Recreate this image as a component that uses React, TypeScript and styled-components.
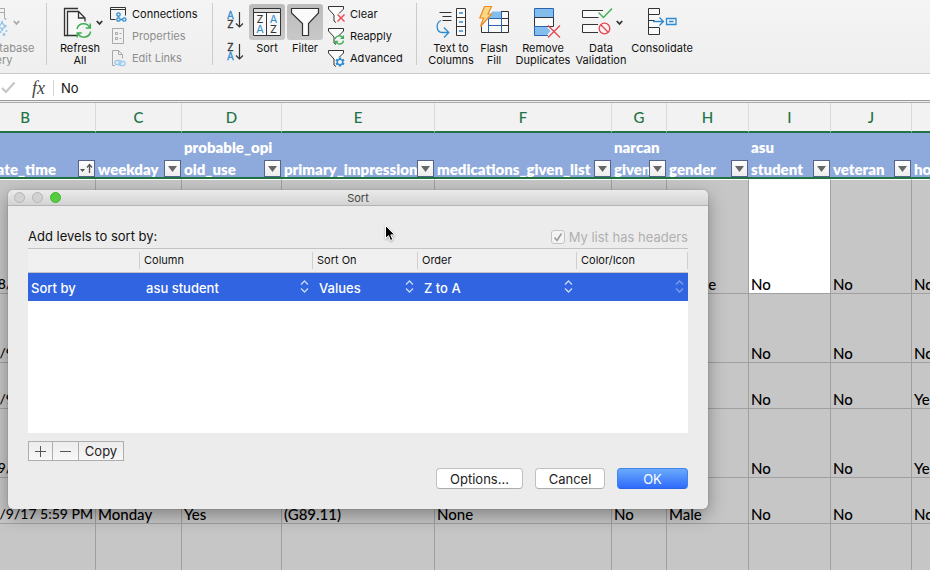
import React from "react";
import styled, { createGlobalStyle } from "styled-components";

const ui = `Inter, "Liberation Sans", sans-serif`;
const sheetFont = `Lato, "Open Sans", sans-serif`;

const ink = "#333333";
const blue = "#2f8bd0";
const deepBlue = "#2a63b5";
const paleBlue = "#83bdee";
const green = "#3fae55";
const red = "#e8474f";
const faint = "#a9a9a9";

const GlobalStyle = createGlobalStyle`
  *, *::before, *::after { box-sizing: border-box; }
  html, body, #root { height: 100%; margin: 0; }
  body { background: #c6c6c6; overflow: hidden; }
  button, input, select { font: inherit; color: inherit; margin: 0; padding: 0; }
  svg { display: block; flex: none; overflow: visible; }
`;

const Page = styled.main`
  position: relative;
  display: flex;
  flex-direction: column;
  height: 100vh;
  overflow: hidden;
  font-family: ${ui};
  color: #111;
`;

/* ---------- ribbon ---------- */

const Ribbon = styled.div`
  display: flex;
  flex: none;
  align-items: flex-start;
  height: 74px;
  padding-top: 3px;
  background: linear-gradient(#f4f4f4, #efefef);
  border-bottom: 1px solid #c9c9c9;
  font-size: 11px;
  line-height: 12px;
`;

const Separator = styled.div`
  flex: none;
  width: 1px;
  height: 62px;
  background: #cccccc;
`;

const Group = styled.div<{ $start?: number }>`
  display: flex;
  flex: none;
  padding-left: ${(p) => p.$start ?? 0}px;
`;

const BigButton = styled.button<{ $width: number; $faded?: boolean; $clipped?: boolean }>`
  display: flex;
  flex: none;
  flex-direction: column;
  align-items: center;
  width: ${(p) => p.$width}px;
  margin-left: ${(p) => (p.$clipped ? -53 : 0)}px;
  border: 0;
  background: none;
  color: ${(p) => (p.$faded ? "#8e8e8e" : "#111")};
  line-height: 12px;
  white-space: nowrap;
`;

const IconRow = styled.span<{ $inset?: number }>`
  display: flex;
  align-items: center;
  justify-content: ${(p) => (p.$inset ? "flex-start" : "center")};
  gap: 4px;
  width: 100%;
  height: 39px;
  padding: 4px 0 3px ${(p) => p.$inset ?? 0}px;
`;

const Pressed = styled.span`
  display: flex;
  align-items: center;
  justify-content: center;
  width: 36px;
  height: 36px;
  margin: 1px 0 2px;
  border-radius: 3px;
  background: linear-gradient(#bcbcbc, #c8c8c8);
`;

const SmallList = styled.div<{ $width: number }>`
  display: flex;
  flex: none;
  flex-direction: column;
  width: ${(p) => p.$width}px;
`;

const SmallButton = styled.button<{ $faded?: boolean }>`
  display: flex;
  align-items: center;
  gap: 5px;
  height: 22px;
  border: 0;
  background: none;
  color: ${(p) => (p.$faded ? "#8e8e8e" : "#111")};
  white-space: nowrap;
`;

const SortStack = styled.div`
  display: flex;
  flex-direction: column;
  gap: 12px;
  width: 22px;
  padding-top: 7px;
`;

const PlainIconButton = styled.button`
  display: flex;
  height: 20px;
  border: 0;
  background: none;
`;

const Chevron = ({ color = ink }: { color?: string }) => (
  <svg width="7" height="6" viewBox="0 0 7 6" fill="none" stroke={color} strokeWidth="1.800">
    <path d="M.8 1l2.700 3 2.700-3" />
  </svg>
);

const DatabaseIcon = () => (
  <svg width="30" height="32" viewBox="0 0 30 32" fill="none" stroke={faint}>
    <path d="M8 1.500h17.500v10M8 5.500h17.500" />
    <g stroke="#8cc4ec" strokeWidth="1.300">
      <path d="M20 19c2-.5 2.500-1.500 3-5 .7 3.500 1.500 4.300 4.500 5-3 .8-4 1.800-4.500 5-.5-3-1-4-3-4.500" />
    </g>
    <g fill="#8cc4ec" stroke="none">
      <circle cx="26.500" cy="12" r="1" />
      <circle cx="25" cy="27.500" r="1.400" />
      <circle cx="21.500" cy="25" r="1" />
      <circle cx="27.500" cy="24" r="1" />
    </g>
  </svg>
);

const RefreshArrows = () => (
  <>
    <path d="M1 6.500A6.800 6.800 0 0 1 13.600 4.800M14.300 1v4.500H9.800" />
    <path d="M14.600 9A6.800 6.800 0 0 1 2 11.200M1.300 15v-4.500h4.500" />
  </>
);

const RefreshIcon = () => (
  <svg width="28" height="32" viewBox="0 0 28 32" fill="none" stroke={ink} strokeWidth="1.300">
    <path d="M14 1.500H.5v27H3.500" />
    <path d="M13 28.500H3.500v-24h11l6.500 6.500v3.500" fill="#f8f8f8" />
    <path d="M14.500 4.500v6.500H21" />
    <g transform="translate(12 15.500)" stroke={green} strokeWidth="1.500">
      <RefreshArrows />
    </g>
  </svg>
);

const ConnectionsIcon = () => (
  <svg width="17" height="18" viewBox="0 0 17 18" fill="none" stroke={ink}>
    <path d="M5.500 14.500h-5v-12h15v8M.5 4.500h15" />
    <g stroke={blue} strokeWidth="1.300">
      <circle cx="8.500" cy="9.500" r="1.700" />
      <circle cx="8.500" cy="14.500" r="1.700" />
      <circle cx="14.300" cy="14.500" r="1.700" />
      <path d="M8.500 11.200v1.600M10.200 14.500h2.400" />
    </g>
  </svg>
);

const PropertiesIcon = () => (
  <svg width="17" height="18" viewBox="0 0 17 18" fill="none" stroke={faint}>
    <path d="M2.500 1.500h11v15h-11zM5.500 5.500h2v2h-2zM5.500 10.500h2v2h-2zM9.500 6.500h2M9.500 11.500h2" />
  </svg>
);

const LinksIcon = () => (
  <svg width="17" height="18" viewBox="0 0 17 18" fill="none" stroke={faint}>
    <path d="M5 16.500H2.500v-15h6l4 4v4M8.500 1.500v4h4" />
    <g stroke="#9accf0" strokeWidth="1.400">
      <rect x="5" y="11.500" width="6" height="4" rx="2" />
      <rect x="9" y="12.500" width="6" height="4" rx="2" />
    </g>
  </svg>
);

const LetterSortIcon = ({ first, second }: { first: string; second: string }) => (
  <svg width="18" height="20" viewBox="0 0 18 20" fontFamily="Inter, sans-serif" fontSize="10" textAnchor="middle">
    <text x="4.500" y="8.500" fill={first === "A" ? blue : ink} stroke={first === "A" ? blue : ink} strokeWidth=".3">{first}</text>
    <text x="4.500" y="17.500" fill={second === "A" ? blue : ink} stroke={second === "A" ? blue : ink} strokeWidth=".3">{second}</text>
    <path d="M13.500 2v15M10 13.500l3.500 3.500 3.500-3.500" fill="none" stroke={ink} strokeWidth="1.200" />
  </svg>
);

const SortIcon = () => (
  <svg width="28" height="28" viewBox="0 0 28 28" fontFamily="Inter, sans-serif" fontSize="11" textAnchor="middle">
    <path d="M.5.5h27v27H.5z" fill="#f8f8f8" stroke={ink} />
    <path d="M1 1h26v3H1z" fill="#d9d9d9" />
    <path d="M.5 4.500h27M13.500 4.500v23" stroke={ink} />
    <text x="7" y="15" fill={ink}>Z</text>
    <text x="7" y="25" fill={blue}>A</text>
    <text x="20.500" y="15" fill={blue}>A</text>
    <text x="20.500" y="25" fill={ink}>Z</text>
  </svg>
);

const FilterIcon = () => (
  <svg width="28" height="28" viewBox="0 0 28 28">
    <path d="M.5.5h27v4.500l-10 10.500v12h-6v-12L.5 5z" fill="#fbfbfb" stroke={ink} strokeWidth="1.200" />
  </svg>
);

const FunnelBadge = ({ kind }: { kind: "clear" | "reapply" | "advanced" }) => (
  <svg width="17" height="18" viewBox="0 0 17 18" fill="none" stroke={ink}>
    <path d="M8 17.500l-2-1.500v-6L.5 4V1.500h15V4L11 8.500" fill="#fbfbfb" />
    {kind === "clear" && <path d="M9.500 9.500l7 7M16.500 9.500l-7 7" stroke={red} strokeWidth="1.400" />}
    {kind === "reapply" && (
      <g transform="translate(6.500 8) scale(.62)" stroke={green} strokeWidth="2.200">
        <RefreshArrows />
      </g>
    )}
    {kind === "advanced" && (
      <g stroke={blue}>
        <path d="M12 8.500v2M12 15.500v2M8 10.700l1.800 1M14.200 14.300l1.800 1M8 15.300l1.800-1M14.200 11.700l1.800-1" strokeWidth="2.400" />
        <circle cx="12" cy="13" r="2.700" strokeWidth="1.300" fill="#f2f2f2" />
      </g>
    )}
  </svg>
);

const TextColumnsIcon = () => (
  <svg width="30" height="32" viewBox="0 0 30 32" fill="none" stroke={ink}>
    <path d="M3.500 5.500h12M6.500 9.500h9M6.500 13.500h9" />
    <path d="M20.500 1.500h9v27h-9zM20.500 10.500h9M20.500 19.500h9" fill="#fafafa" />
    <g stroke={blue} strokeWidth="1.300">
      <path d="M23 6h4M23 15h4M23 24h4" />
      <path d="M5 13.500C-1 16 .5 25.500 6 25.500h6.500M8 20.500l4.800 5-4.800 5" />
    </g>
  </svg>
);

const FlashIcon = () => (
  <svg width="30" height="32" viewBox="0 0 30 32" fill="none">
    <path d="M2.500 4.500h27v21h-27z" fill="#fafafa" />
    <path d="M13 4.500h9.500v7h-13z" fill={paleBlue} />
    <path d="M22 4.500h7.500v21h-27v-6M22.500 4.500v21M22.500 11.500h7M22.500 18.500h7M9.500 18.500v7" stroke={ink} />
    <path d="M22.500 5v20.500M9.500 25V11.500h13M9.500 18.500h13" stroke={deepBlue} />
    <path d="M5.500-.5h7L9 7h3.500L1.500 19.500 4.500 11H.8z" fill="#fbd886" stroke="#ee8a26" strokeWidth="1.200" />
  </svg>
);

const RemoveIcon = () => (
  <svg width="26" height="32" viewBox="0 0 26 32" fill="none">
    <path d="M.5 1.500h19v9H.5z" fill={paleBlue} stroke={deepBlue} />
    <path d="M.5 10.500h19v9H.5z" fill="#fafafa" stroke={ink} />
    <path d="M12.500 28.500H.5v-9h12l4 4.500z" fill={paleBlue} />
    <path d="M14 28.500H.5v-9H13" stroke={deepBlue} />
    <path d="M14 18.500l12 12M26 18.500l-12 12" stroke={red} strokeWidth="1.300" />
  </svg>
);

const ValidationIcon = () => (
  <svg width="30" height="32" viewBox="0 0 30 32" fill="none" stroke={ink}>
    <path d="M21 3.500H.5v7h16M16 17.500H.5v8H16" fill="#fafafa" />
    <path d="M16.500 5.500l5 5 8.500-9" stroke={green} strokeWidth="1.400" />
    <circle cx="22.500" cy="21.500" r="5.300" fill="#fdf3f3" stroke={red} strokeWidth="1.300" />
    <path d="M18.800 17.800l7.400 7.400" stroke={red} strokeWidth="1.300" />
  </svg>
);

const ConsolidateIcon = () => (
  <svg width="28" height="32" viewBox="0 0 28 32" fill="none" stroke={ink}>
    <path d="M11.500 7V1.500H.5v26h11V21M.5 7.500h11M.5 13.500h6M.5 20.500h11" fill="#fafafa" />
    <g stroke={blue} strokeWidth="1.300">
      <path d="M5 14.500h10M11.500 10.500l4 4-4 4" />
      <path d="M18.500 11.500h9.500v6h-9.500zM21 14.500h4.500" />
    </g>
  </svg>
);

/* ---------- formula bar ---------- */

const FormulaBar = styled.div`
  display: flex;
  flex: none;
  align-items: center;
  height: 29px;
  padding-bottom: 2px;
  background: linear-gradient(#ffffff 26px, #999999 26px, #999999 27px, #ededed 27px, #ededed 28px, #ababab 28px);
`;

const CheckMark = styled.span`
  width: 32px;
  padding-left: 1px;
`;

const Fx = styled.label`
  width: 21px;
  color: #444;
  font: italic 18px/22px "Liberation Serif", serif;
`;

const FormulaInput = styled.input`
  flex: 1;
  height: 16px;
  min-width: 0;
  padding-left: 7px;
  border: 0;
  border-left: 1px solid #d5d5d5;
  outline: 0;
  background: none;
  font-size: 13px;
`;

/* ---------- sheet ---------- */

const SheetArea = styled.div`
  flex: 1;
  min-height: 0;
  overflow: hidden;
`;

const Sheet = styled.table`
  width: calc(100% + 126px);
  margin-left: -45px;
  border-spacing: 0;
  table-layout: fixed;
  font-family: ${sheetFont};
  font-size: 15px;
  line-height: 18px;
`;

const Letter = styled.th`
  height: 30px;
  padding: 0;
  border-right: 1px solid #dadada;
  border-bottom: 2px solid #217346;
  background: #f2f2f2;
  color: #217346;
  font-weight: 500;
`;

const FieldCell = styled.th`
  height: 46px;
  padding: 0 1px 0 0;
  overflow: hidden;
  border-bottom: 2px solid #217346;
  background: #8ea9db;
  color: #fff;
  font-weight: 800;
  line-height: 22px;
  text-align: left;
  vertical-align: bottom;
  white-space: nowrap;
`;

const FieldInner = styled.div`
  display: grid;
  align-items: end;
  height: 44px;
  > * { grid-area: 1 / 1; }
`;

const FieldName = styled.span<{ $right?: boolean }>`
  margin-bottom: -3px;
  padding: 0 ${(p) => (p.$right ? 39 : 0)}px 0 2px;
  text-align: ${(p) => (p.$right ? "right" : "left")};
`;

const FilterButton = styled.button`
  display: grid;
  place-items: center;
  justify-self: end;
  width: 17px;
  height: 17px;
  border: 1px solid #56648a;
  background: linear-gradient(#ffffff, #ececec);
`;

const Cell = styled.td<{ $active?: boolean; $top?: boolean; $h: number; $date?: boolean }>`
  height: ${(p) => p.$h}px;
  padding: 0 2px;
  overflow: hidden;
  border-top: ${(p) => (p.$top ? "1px solid #fff" : "0")};
  border-right: 1px solid #a0a0a0;
  border-bottom: 1px solid #a0a0a0;
  background: ${(p) => (p.$active ? "#fff" : "#c6c6c6")};
  color: #000;
  font-size: ${(p) => (p.$date ? 14 : 15)}px;
  font-weight: 500;
  text-align: ${(p) => (p.$date ? "right" : "left")};
  vertical-align: bottom;
  white-space: nowrap;
`;

const columns = [
  { letter: "B", width: 141, field: ["date_time"] },
  { letter: "C", width: 86, field: ["weekday"] },
  { letter: "D", width: 100, field: ["probable_opi", "oid_use"] },
  { letter: "E", width: 153, field: ["primary_impression"] },
  { letter: "F", width: 177, field: ["medications_given_list"] },
  { letter: "G", width: 55, field: ["narcan", "given"] },
  { letter: "H", width: 82, field: ["gender"] },
  { letter: "I", width: 82, field: ["asu", "student"] },
  { letter: "J", width: 81, field: ["veteran"] },
  { letter: "K", width: 0, field: ["homeless"] },
];

const rows = [
  { h: 115, cells: ["1/8/17 10:59 PM", "", "", "", "", "", "Female", "No", "No", "No"] },
  { h: 69, cells: ["1/9/17 5:59 PM", "", "", "", "", "", "", "No", "No", "No"] },
  { h: 46, cells: ["1/9/17 5:59 PM", "", "", "", "", "", "", "No", "No", "Yes"] },
  { h: 69, cells: ["1/9/17 10:59 PM", "", "", "", "", "", "", "No", "No", "Yes"] },
  { h: 46, cells: ["1/9/17 5:59 PM", "Monday", "Yes", "(G89.11)", "None", "No", "Male", "No", "No", "No"] },
  { h: 69, cells: ["", "", "", "", "", "", "", "", "", ""] },
];

/* ---------- sort dialog ---------- */

const Dialog = styled.section`
  position: absolute;
  top: 190px;
  left: 8px;
  width: 700px;
  overflow: hidden;
  border-radius: 5px;
  background: #ececec;
  box-shadow: 0 0 1px rgba(0, 0, 0, 0.6), 0 6px 18px rgba(0, 0, 0, 0.35);
  font-size: 13px;
  line-height: 16px;
`;

const TitleBar = styled.header`
  display: grid;
  grid-template-columns: 1fr auto 1fr;
  align-items: center;
  height: 16px;
  border-bottom: 1px solid #b4b4b4;
  background: linear-gradient(#ebebeb, #d3d3d3);
`;

const Lights = styled.div`
  display: flex;
  gap: 7px;
  padding-left: 6px;
`;

const Light = styled.button<{ $on?: boolean }>`
  width: 11px;
  height: 11px;
  border: 1px solid ${(p) => (p.$on ? "#41b533" : "#b5b5b5")};
  border-radius: 50%;
  background: ${(p) => (p.$on ? "#55cc3f" : "#d2d2d2")};
`;

const Title = styled.h1`
  margin: 0;
  color: #444;
  font-size: 11px;
  font-weight: 400;
  line-height: 14px;
`;

const DialogBody = styled.div`
  padding: 20px;
`;

const Intro = styled.div`
  display: flex;
  align-items: center;
  justify-content: space-between;
  height: 20px;
  margin-bottom: 2px;
`;

const CheckLabel = styled.label`
  display: flex;
  align-items: center;
  gap: 4px;
  padding-top: 2px;
  color: #b0b0b0;
`;

const CheckBox = styled.input`
  width: 14px;
  height: 14px;
  appearance: none;
  border: 1px solid #c4c4c4;
  border-radius: 3px;
  background: #f4f4f4;
`;

const CheckHolder = styled.span`
  display: grid;
  place-items: center;
  > * { grid-area: 1 / 1; }
  > svg { pointer-events: none; }
`;

const Levels = styled.div`
  height: 185px;
  border-top: 1px solid #c3c3c3;
  background: #fff;
`;

const LevelTable = styled.table`
  width: 100%;
  border-spacing: 0;
  table-layout: fixed;
`;

const LevelHead = styled.th`
  height: 24px;
  padding: 3px 0;
  border-bottom: 1px solid #c3c3c3;
  background: #f0f0f0;
  font-size: 11px;
  font-weight: 400;
  line-height: 17px;
  text-align: left;
`;

const HeadText = styled.span`
  display: block;
  height: 17px;
  padding-left: 4px;
  border-right: 1px solid #cfcfcf;
`;

const LevelCell = styled.td`
  height: 28px;
  padding: 2px 0 0 3px;
  background: #3064e1;
  color: #fff;
  font-weight: 500;
`;

const Picker = styled.div<{ $dim?: boolean }>`
  display: grid;
  align-items: center;
  padding-left: 3px;
  > * { grid-area: 1 / 1; }
  > svg {
    justify-self: end;
    margin: 0 4px 4px 0;
    opacity: ${(p) => (p.$dim ? 0.5 : 1)};
    pointer-events: none;
  }
`;

const Select = styled.select`
  appearance: none;
  width: 100%;
  border: 0;
  background: none;
  line-height: 18px;
`;

const UpDown = () => (
  <svg width="9" height="13" viewBox="0 0 9 13" fill="none" stroke="#c9d9fa" strokeWidth="1.300">
    <path d="M1 4.500L4.500 1 8 4.500M1 8.500L4.500 12 8 8.500" />
  </svg>
);

const Segments = styled.div`
  display: flex;
  width: fit-content;
  height: 20px;
  margin-top: 8px;
  border: 1px solid #adadad;
  background: linear-gradient(#ececec, #f8f8f8);
`;

const Segment = styled.button<{ $width: number }>`
  display: grid;
  place-items: center;
  width: ${(p) => p.$width}px;
  border: 0;
  background: none;
  color: #222;
  & + & { border-left: 1px solid #adadad; }
`;

const Footer = styled.footer`
  display: flex;
  justify-content: flex-end;
  gap: 12px;
  margin-top: 7px;
`;

const PushButton = styled.button<{ $width: number; $primary?: boolean }>`
  width: ${(p) => p.$width}px;
  height: 21px;
  border: 1px solid ${(p) => (p.$primary ? "#3f83f0" : "#c0c0c0")};
  border-bottom-color: ${(p) => (p.$primary ? "#2d62e8" : "#adadad")};
  border-radius: 4px;
  background: ${(p) => (p.$primary ? "linear-gradient(#6aaafb, #2f6bfb)" : "#fff")};
  color: ${(p) => (p.$primary ? "#fff" : "#222")};
  line-height: 18px;
`;

const Pointer = styled.svg`
  position: absolute;
  top: 224px;
  left: 384px;
  filter: drop-shadow(0 1px 1px rgba(0, 0, 0, 0.3));
`;

const noop = () => {};

export default function App() {
  return (
    <Page>
      <GlobalStyle />
      <Ribbon role="toolbar" aria-label="Data">
        <BigButton $width={99} $faded $clipped>
          <IconRow $inset={32}>
            <DatabaseIcon />
            <Chevron color={faint} />
          </IconRow>
          <span>New Database</span>
          <span>Query</span>
        </BigButton>
        <Separator />
        <Group $start={3}>
          <BigButton $width={60}>
            <IconRow $inset={14}>
              <RefreshIcon />
              <Chevron />
            </IconRow>
            <span>Refresh</span>
            <span>All</span>
          </BigButton>
          <SmallList $width={102}>
            <SmallButton><ConnectionsIcon />Connections</SmallButton>
            <SmallButton $faded><PropertiesIcon />Properties</SmallButton>
            <SmallButton $faded><LinksIcon />Edit Links</SmallButton>
          </SmallList>
        </Group>
        <Separator />
        <Group $start={13}>
          <SortStack>
            <PlainIconButton aria-label="Sort ascending"><LetterSortIcon first="A" second="Z" /></PlainIconButton>
            <PlainIconButton aria-label="Sort descending"><LetterSortIcon first="Z" second="A" /></PlainIconButton>
          </SortStack>
          <BigButton $width={38}>
            <Pressed><SortIcon /></Pressed>
            <span>Sort</span>
          </BigButton>
          <BigButton $width={38}>
            <Pressed><FilterIcon /></Pressed>
            <span>Filter</span>
          </BigButton>
          <Group $start={4}>
            <SmallList $width={88}>
              <SmallButton><FunnelBadge kind="clear" />Clear</SmallButton>
              <SmallButton><FunnelBadge kind="reapply" />Reapply</SmallButton>
              <SmallButton><FunnelBadge kind="advanced" />Advanced</SmallButton>
            </SmallList>
          </Group>
        </Group>
        <Separator />
        <Group $start={10}>
          <BigButton $width={48}>
            <IconRow><TextColumnsIcon /></IconRow>
            <span>Text to</span>
            <span>Columns</span>
          </BigButton>
          <BigButton $width={38}>
            <IconRow><FlashIcon /></IconRow>
            <span>Flash</span>
            <span>Fill</span>
          </BigButton>
          <BigButton $width={60}>
            <IconRow $inset={21}><RemoveIcon /></IconRow>
            <span>Remove</span>
            <span>Duplicates</span>
          </BigButton>
          <BigButton $width={56}>
            <IconRow $inset={9}><ValidationIcon /><Chevron /></IconRow>
            <span>Data</span>
            <span>Validation</span>
          </BigButton>
          <BigButton $width={66}>
            <IconRow><ConsolidateIcon /></IconRow>
            <span>Consolidate</span>
          </BigButton>
        </Group>
      </Ribbon>

      <FormulaBar>
        <CheckMark>
          <svg width="15" height="13" viewBox="0 0 15 13" fill="none" stroke="#c6c6c6" strokeWidth="2.200">
            <path d="M1 7l4 4 8.500-9.500" />
          </svg>
        </CheckMark>
        <Fx htmlFor="formula">fx</Fx>
        <FormulaInput id="formula" value="No" onChange={noop} />
      </FormulaBar>

      <SheetArea>
        <Sheet>
          <colgroup>
            {columns.map((c) => (
              <col key={c.letter} width={c.width || undefined} />
            ))}
          </colgroup>
          <thead>
            <tr>
              {columns.map((c) => (
                <Letter key={c.letter} scope="col">{c.letter}</Letter>
              ))}
            </tr>
            <tr>
              {columns.map((c, i) => (
                <FieldCell key={c.letter} scope="col">
                  <FieldInner>
                    <FieldName $right={i === 0}>
                      {c.field[0]}
                      {c.field[1] && <><br />{c.field[1]}</>}
                    </FieldName>
                    <FilterButton aria-label={`Filter ${c.field.join("")}`}>
                      {i === 0 ? (
                        <svg width="13" height="11" viewBox="0 0 13 11" fill="#555">
                          <path d="M0 6h5L2.500 9z" />
                          <path d="M9.500 10V2M7 4.500L9.500 1.500 12 4.500" fill="none" stroke="#555" strokeWidth="1.300" />
                        </svg>
                      ) : (
                        <svg width="9" height="6" viewBox="0 0 9 6"><path d="M0 0h9L4.500 6z" fill="#666" /></svg>
                      )}
                    </FilterButton>
                  </FieldInner>
                </FieldCell>
              ))}
            </tr>
          </thead>
          <tbody>
            {rows.map((r, ri) => (
              <tr key={ri}>
                {r.cells.map((text, ci) => (
                  <Cell key={ci} $h={r.h} $top={ri === 0} $active={ri === 0 && ci === 7} $date={ci === 0}>
                    {text}
                  </Cell>
                ))}
              </tr>
            ))}
          </tbody>
        </Sheet>
      </SheetArea>

      <Dialog role="dialog" aria-labelledby="sort-title">
        <TitleBar>
          <Lights>
            <Light aria-label="Close" />
            <Light aria-label="Minimize" />
            <Light aria-label="Zoom" $on />
          </Lights>
          <Title id="sort-title">Sort</Title>
        </TitleBar>
        <DialogBody>
          <Intro>
            <span>Add levels to sort by:</span>
            <CheckLabel>
              <CheckHolder>
                <CheckBox type="checkbox" defaultChecked disabled />
                <svg width="10" height="10" viewBox="0 0 10 10" fill="none" stroke="#999" strokeWidth="1.500">
                  <path d="M1.500 5.500L4 8.500l4.500-7" />
                </svg>
              </CheckHolder>
              My list has headers
            </CheckLabel>
          </Intro>
          <Levels>
            <LevelTable>
              <colgroup>
                <col width="112" />
                <col width="173" />
                <col width="105" />
                <col width="159" />
                <col />
              </colgroup>
              <thead>
                <tr>
                  {["", "Column", "Sort On", "Order", "Color/Icon"].map((h) => (
                    <LevelHead key={h} scope="col"><HeadText>{h}</HeadText></LevelHead>
                  ))}
                </tr>
              </thead>
              <tbody>
                <tr>
                  <LevelCell>Sort by</LevelCell>
                  {[
                    ["Column", "asu student"],
                    ["Sort On", "Values"],
                    ["Order", "Z to A"],
                    ["Color/Icon", ""],
                  ].map(([name, value]) => (
                    <LevelCell key={name}>
                      <Picker $dim={!value}>
                        <Select aria-label={name} disabled={!value}>
                          <option>{value}</option>
                        </Select>
                        <UpDown />
                      </Picker>
                    </LevelCell>
                  ))}
                </tr>
              </tbody>
            </LevelTable>
          </Levels>
          <Segments>
            <Segment $width={23} aria-label="Add level">
              <svg width="11" height="11" viewBox="0 0 11 11" stroke="#555"><path d="M5.500 0v11M0 5.500h11" /></svg>
            </Segment>
            <Segment $width={26} aria-label="Delete level">
              <svg width="11" height="11" viewBox="0 0 11 11" stroke="#555"><path d="M0 5.500h11" /></svg>
            </Segment>
            <Segment $width={45}>Copy</Segment>
          </Segments>
          <Footer>
            <PushButton $width={87}>Options...</PushButton>
            <PushButton $width={70}>Cancel</PushButton>
            <PushButton $width={71} $primary>OK</PushButton>
          </Footer>
        </DialogBody>
      </Dialog>

      <Pointer width="12" height="19" viewBox="0 0 12 19" aria-hidden="true">
        <path d="M1.500 1.500v13l3-2.800 2 4.800 2.300-1-2-4.600h4z" fill="#000" stroke="#fff" />
      </Pointer>
    </Page>
  );
}
